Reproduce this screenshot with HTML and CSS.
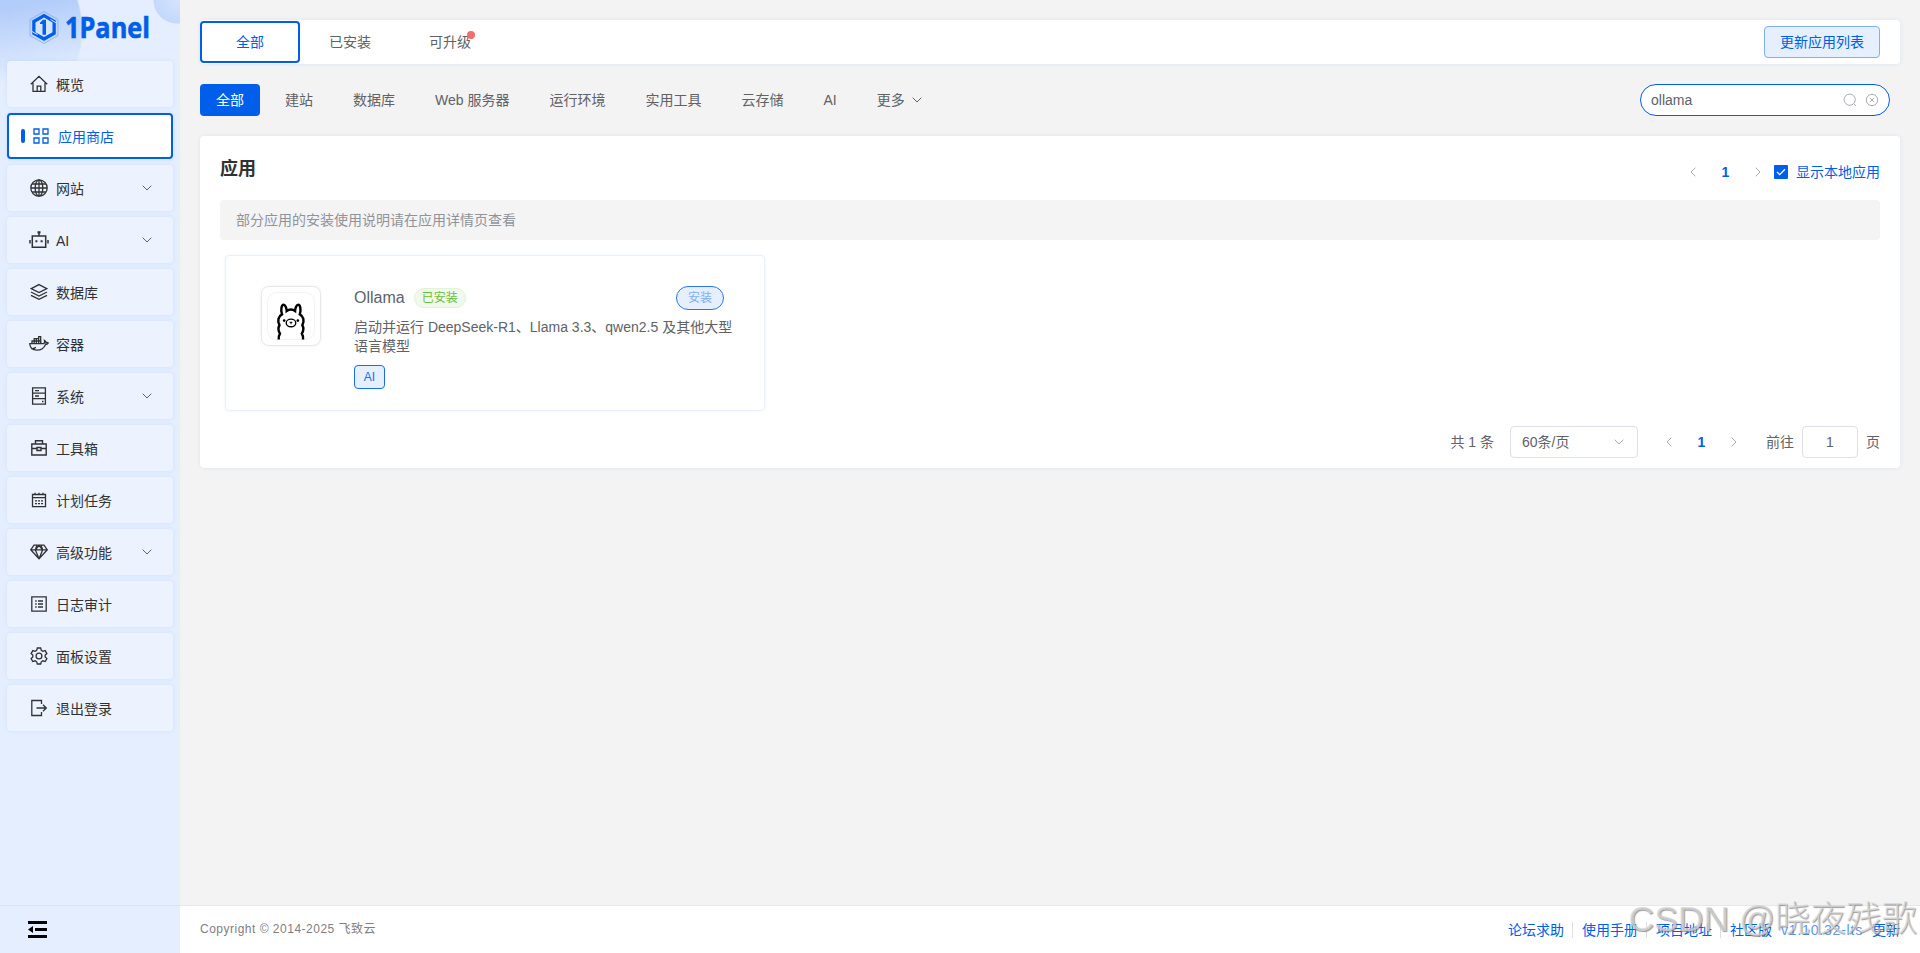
FILE: index.html
```html
<!DOCTYPE html>
<html lang="zh-CN">
<head>
    <meta charset="UTF-8">
    <meta name="viewport" content="width=device-width, initial-scale=1.0">
    <title>1Panel</title>
    <link rel="stylesheet" href="styles.css">
</head>
<body>

    <!-- Sidebar -->
    <aside class="sidebar">
        <div class="logo">
            <svg width="140" height="40" viewBox="0 0 140 40">
                <path d="M15 1.500L29 9.500V25.500L15 33.500L1 25.500V9.500z" fill="none" stroke="#7faaf5" stroke-width=".8"/>
                <path d="M15 3.800L26.800 10.600V24.200L15 31L3.200 24.200V10.600z" fill="#005eeb"/>
                <path d="M15 7.600L23.500 12.500V22.200L15 27.100L6.500 22.200V12.500z" fill="#d5e4fd"/>
                <path d="M3 21.500L8.500 24.500M21.500 9.500l5.500 3.200" stroke="#d5e4fd" stroke-width="1"/>
                <path d="M11 12.800L14 9.800H17V24.800H13.500V14H11z" fill="#005eeb"/>
                <text class="logo-text" x="36" y="28" textLength="85" lengthAdjust="spacingAndGlyphs">1Panel</text>
            </svg>
        </div>
        <nav class="menu">
            <a class="menu-item">
                <svg class="icon" viewBox="0 0 18 18"><path d="M.8 9.300L9 1.300l8.200 8M3 8v8.300h12V8M7.200 16v-4.800h3.600V16"/></svg>
                <span>概览</span>
            </a>
            <a class="menu-item active">
                <i class="bar"></i>
                <svg class="icon icon-small" viewBox="0 0 16 16"><path d="M1 1h5v5H1zM10 1h5v5h-5zM1 10h5v5H1zM10 10h5v5h-5z"/></svg>
                <span>应用商店</span>
            </a>
            <a class="menu-item">
                <svg class="icon" viewBox="0 0 18 18"><circle cx="9" cy="9" r="8.200"/><ellipse cx="9" cy="9" rx="3.800" ry="8.200"/><path d="M9 1v16M1 9h16M2.200 5h13.600M2.200 13h13.600"/></svg>
                <span>网站</span>
                <svg class="arrow" viewBox="0 0 10 6"><path d="M.7.7L5 5 9.300.7"/></svg>
            </a>
            <a class="menu-item">
                <svg class="icon icon-wide" viewBox="0 0 20 18"><path d="M3.300 5h13.400v11.200H3.300zM10 5V1.500M1 9v3.500M19 9v3.500" stroke-width="1.500"/><path d="M8.500.2h3v2.400h-3zM6.400 9.300h2v2h-2zM11.600 9.300h2v2h-2z" class="solid"/></svg>
                <span>AI</span>
                <svg class="arrow" viewBox="0 0 10 6"><path d="M.7.7L5 5 9.300.7"/></svg>
            </a>
            <a class="menu-item">
                <svg class="icon" viewBox="0 0 18 18"><path d="M9 1.600l7.800 4L9 9.600l-7.800-4zM1 9l8 4 8-4M1 12.300l8 4 8-4"/></svg>
                <span>数据库</span>
            </a>
            <a class="menu-item">
                <svg class="icon icon-wide" viewBox="0 0 20 18"><path d="M.8 8.600h13.800c1-.4 1.200-1.700.8-3.200 1 .5 1.500 1.300 1.500 2.200.9-.3 1.800-.2 2.400.3-.6 1.100-1.500 1.500-2.800 1.500-1.500 3.900-4.300 5.700-8.600 5.700C3 15.100.8 12.500.8 8.600z"/><path d="M3 8.500V6h8.800v2.500M5.200 8.500V3.700h4.500v4.800M7.400 8.500V3.700M9.700 3.700V1.600h2v6.900M2.500 13.500c2 .2 3.400-.3 4.300-1.300"/></svg>
                <span>容器</span>
            </a>
            <a class="menu-item">
                <svg class="icon" viewBox="0 0 18 18"><path d="M2.600.8h12.800v16.400H2.600zM2.600 6.200h12.800M2.600 11.700h12.800M5 3.600h4M5 9h4M12 14.500h1.500" stroke-width="1.300"/></svg>
                <span>系统</span>
                <svg class="arrow" viewBox="0 0 10 6"><path d="M.7.7L5 5 9.300.7"/></svg>
            </a>
            <a class="menu-item">
                <svg class="icon" viewBox="0 0 18 18"><path d="M1.800 5h14.400v11H1.800zM5.500 5V1.800h7V5M1.800 9.500h5M11.200 9.500h5M7 8.500h4v3H7z" stroke-width="1.400"/></svg>
                <span>工具箱</span>
            </a>
            <a class="menu-item">
                <svg class="icon" viewBox="0 0 18 18"><path d="M2.500 3.500h13v12.200h-13zM2.500 6.700h13M5 1.800v1.700M9 1.800v1.700M13 1.800v1.700"/><path d="M5 9.800h8M5 12.700h8" stroke-dasharray="2 1"/></svg>
                <span>计划任务</span>
            </a>
            <a class="menu-item">
                <svg class="icon" viewBox="0 0 18 18"><path d="M4 2.200h10l3.300 4.600L9 15.800.7 6.800zM.7 6.800h16.600M9 15.800L5.300 6.800 7 2.200M9 15.800l3.700-9L11 2.200M5.300 6.800L9 2.500l3.700 4.300"/></svg>
                <span>高级功能</span>
                <svg class="arrow" viewBox="0 0 10 6"><path d="M.7.7L5 5 9.300.7"/></svg>
            </a>
            <a class="menu-item">
                <svg class="icon" viewBox="0 0 18 18"><path d="M1.800 1.800h14.400v14.400H1.800z" stroke-width="1.300"/><path d="M5.200 6h1.500M8 6h5M5.200 9h1.500M8 9h5M5.200 12h1.500M8 12h5"/></svg>
                <span>日志审计</span>
            </a>
            <a class="menu-item">
                <svg class="icon" viewBox="0 0 18 18"><path d="M7.300 1h3.400l.6 2.300 1.600 1 2.300-.7 1.700 3-1.700 1.500v1.800l1.700 1.600-1.700 3-2.300-.7-1.600 1-.6 2.200H7.300l-.6-2.200-1.600-1-2.300.7-1.700-3 1.700-1.600V8.100L1.100 6.600l1.700-3 2.300.7 1.600-1z"/><circle cx="9" cy="9" r="2.900"/></svg>
                <span>面板设置</span>
            </a>
            <a class="menu-item">
                <svg class="icon" viewBox="0 0 18 18"><path d="M11.500 5V1.500H1.800v15h9.700V13M6.500 9h9.800M13 5.700L16.300 9 13 12.300" stroke-width="1.300"/></svg>
                <span>退出登录</span>
            </a>
        </nav>
        <div class="collapse">
            <svg width="19" height="17" viewBox="0 0 19 17"><path d="M0 0h19v3H0zM7 7h12v3H7zM0 14h19v3H0zM0 8.500L5 5v7z"/></svg>
        </div>
    </aside>

    <div class="main">
        <div class="content">
            <!-- Tabs -->
            <div class="tabs">
                <a class="tab active">全部</a>
                <a class="tab">已安装</a>
                <a class="tab"><span class="tab-badge">可升级<i class="dot"></i></span></a>
                <button class="btn-update">更新应用列表</button>
            </div>

            <!-- Category filter and search -->
            <div class="filters">
                <button class="filter active">全部</button>
                <button class="filter">建站</button>
                <button class="filter">数据库</button>
                <button class="filter">Web 服务器</button>
                <button class="filter">运行环境</button>
                <button class="filter">实用工具</button>
                <button class="filter">云存储</button>
                <button class="filter">AI</button>
                <button class="filter">更多 <svg class="arrow" viewBox="0 0 10 6"><path d="M.7.7L5 5 9.300.7"/></svg></button>
                <div class="search">
                    <input type="text" value="ollama">
                    <svg width="14" height="14" viewBox="0 0 14 14"><circle cx="6.700" cy="6.700" r="5.600"/><path d="M10.700 10.700l2.300 2.300"/></svg>
                    <svg width="14" height="14" viewBox="0 0 14 14"><circle cx="7" cy="7" r="5.700"/><path d="M5.200 5.200l3.600 3.600M8.800 5.200L5.200 8.800"/></svg>
                </div>
            </div>

            <!-- App list -->
            <section class="panel">
                <div class="panel-header">
                    <h1>应用</h1>
                    <div class="header-tools">
                        <div class="pager">
                            <svg viewBox="0 0 6 10"><path d="M5.300.7L1 5l4.300 4.300"/></svg>
                            <b>1</b>
                            <svg viewBox="0 0 6 10"><path d="M.7.7L5 5 .7 9.300"/></svg>
                        </div>
                        <label class="local">
                            <svg width="14" height="14" viewBox="0 0 14 14"><rect width="14" height="14" rx="1"/><path d="M3 6.900l2.700 2.700 5.300-5.400"/></svg>
                            显示本地应用
                        </label>
                    </div>
                </div>

                <div class="notice">部分应用的安装使用说明请在应用详情页查看</div>

                <div class="app-card">
                    <div class="app-icon">
                        <svg width="48" height="48" viewBox="0 0 47 47">
                            <rect class="tile" x=".5" y=".5" width="46" height="46" rx="9"/>
                            <path d="M11.500 46.500c-.2-2.500.2-4.300 1.200-5.800-1.800-2.700-1.900-5.700-.5-8.200-2.300-4.200-1.100-8.800 2.500-10.500-1.600-5-.3-9.500 1.500-9.500 1.700 0 3 3 3.100 6 2.500-1.700 5.700-1.700 8.200 0 .1-3 1.400-6 3.100-6 1.800 0 3.100 4.500 1.500 9.500 3.600 1.700 4.800 6.300 2.500 10.500 1.400 2.500 1.300 5.500-.5 8.200 1 1.500 1.400 3.300 1.200 5.800"/>
                            <ellipse cx="23.500" cy="30.300" rx="4.700" ry="3.700" stroke-width="1.300"/>
                            <path d="M22.300 29.300l1.200.9 1.200-.9M23.500 30.200v1.500" stroke-width="1.100"/>
                            <circle class="eye" cx="16.800" cy="28" r="1.300"/>
                            <circle class="eye" cx="30.200" cy="28" r="1.300"/>
                        </svg>
                    </div>
                    <div class="app-info">
                        <div class="app-title">
                            <span class="app-name">Ollama</span>
                            <span class="tag-installed">已安装</span>
                            <button class="btn-install">安装</button>
                        </div>
                        <p class="app-desc">启动并运行 DeepSeek-R1、Llama 3.3、qwen2.5 及其他大型语言模型</p>
                        <span class="tag">AI</span>
                    </div>
                </div>

                <div class="pagination">
                    <span>共 1 条</span>
                    <div class="page-size">60条/页 <svg class="arrow" viewBox="0 0 10 6"><path d="M.7.7L5 5 9.300.7"/></svg></div>
                    <div class="pager">
                        <svg viewBox="0 0 6 10"><path d="M5.300.7L1 5l4.300 4.300"/></svg>
                        <b>1</b>
                        <svg viewBox="0 0 6 10"><path d="M.7.7L5 5 .7 9.300"/></svg>
                    </div>
                    <div class="jump">前往 <input type="text" value="1"> 页</div>
                </div>
            </section>
        </div>

        <footer class="footer">
            <span class="copyright">Copyright © 2014-2025 飞致云</span>
            <div class="links">
                <a>论坛求助</a>
                <a>使用手册</a>
                <a>项目地址</a>
                <a>社区版</a>
                <span class="version">v1.10.32-lts</span>
                <span class="update">更新</span>
            </div>
        </footer>
    </div>

    <div class="watermark">CSDN @晓夜残歌</div>

</body>
</html>
```
FILE: styles.css
```css
* {
    box-sizing: border-box;
}

body {
    margin: 0;
    display: flex;
    height: 100vh;
    overflow: hidden;
    font-family: "Liberation Sans", "Noto Sans CJK SC", sans-serif;
    font-size: 14px;
    line-height: 20px;
    color: #606266;
    background: #f3f3f3;
}

button, input {
    font: inherit;
    color: inherit;
}

svg {
    flex: none;
    display: block;
    fill: none;
}

/* Sidebar */
.sidebar {
    width: 180px;
    flex: none;
    display: flex;
    flex-direction: column;
    background:
        radial-gradient(circle at 177px 0, #d5e4fd 0, #c3d8fc 23px, transparent 24px) no-repeat,
        linear-gradient(170deg, rgba(228, 238, 254, 0) 10px, #e4eefe 85px) 0 0 / 100px 100px no-repeat,
        radial-gradient(circle at -18px 30px, #b3cdfa 0, #b3cdfa 99px, transparent 101px) 0 0 / 180px 100px no-repeat,
        #e4eefe;
}

.logo {
    height: 61px;
    padding: 10px 0 0 29px;
}

.logo-text {
    font-family: "Open Sans", sans-serif;
    font-size: 29px;
    font-weight: 700;
    fill: #005eeb;
    stroke: #005eeb;
    stroke-width: 0.6;
}

.menu {
    flex: 1;
    display: flex;
    flex-direction: column;
    gap: 6px;
    padding: 0 7px;
}

.menu-item {
    height: 46px;
    flex: none;
    display: flex;
    align-items: center;
    padding: 0 21px 0 23px;
    border-radius: 4px;
    background: #ecf3fe;
    box-shadow: 0 0 4px rgba(0, 94, 235, 0.1);
    color: #303133;
}

.menu-item span {
    margin-left: 8px;
    padding-top: 1px;
}

.icon {
    width: 18px;
    height: 18px;
    stroke: #303133;
    stroke-width: 1.300;
}

.icon-wide {
    width: 20px;
    margin: 0 -1px;
}

.icon-small {
    width: 16px;
    height: 16px;
}

.icon .solid {
    fill: #303133;
    stroke: none;
}

.menu-item.active {
    padding-left: 12px;
    border: 2px solid #005eeb;
    background: #fff;
    color: #005eeb;
}

.menu-item.active .icon {
    margin-left: 8px;
    stroke: #005eeb;
}

.menu-item.active span {
    margin-left: 9px;
}

.bar {
    width: 4px;
    height: 14px;
    border-radius: 2px;
    background: #005eeb;
}

.arrow {
    width: 10px;
    height: 6px;
    margin-left: auto;
    stroke: #606266;
}

.collapse {
    height: 48px;
    padding: 15px 28px;
    border-top: 1px solid #dce4f0;
}

.collapse svg {
    fill: #000;
}

/* Main column */
.main {
    flex: 1;
    display: flex;
    flex-direction: column;
}

.content {
    flex: 1;
    padding: 20px;
}

.tabs {
    height: 44px;
    display: flex;
    align-items: center;
    padding-right: 20px;
    border-radius: 4px;
    background: #fff;
    box-shadow: 0 0 4px rgba(0, 94, 235, 0.1);
}

.tab {
    width: 100px;
    height: 42px;
    line-height: 42px;
    text-align: center;
}

.tab.active {
    line-height: 38px;
    border: 2px solid #005eeb;
    border-radius: 4px;
    color: #005eeb;
}

.tab-badge {
    position: relative;
}

.dot {
    position: absolute;
    top: -3px;
    right: -4px;
    width: 8px;
    height: 8px;
    border-radius: 50%;
    background: #f56c6c;
}

.btn-update {
    width: 116px;
    height: 32px;
    margin-left: auto;
    padding: 0;
    border: 1px solid #80aff5;
    border-radius: 4px;
    background: #e5effd;
    color: #005eeb;
}

.filters {
    display: flex;
    gap: 8px;
    margin: 20px 10px 20px 0;
}

.filter {
    height: 32px;
    display: flex;
    align-items: center;
    gap: 7px;
    padding: 0 16px;
    border: none;
    border-radius: 4px;
    background: none;
}

.filter.active {
    margin-right: 1px;
    background: #005eeb;
    color: #fff;
}

.search {
    width: 250px;
    height: 32px;
    margin-left: auto;
    display: flex;
    align-items: center;
    gap: 8px;
    padding: 0 10px;
    border: 1px solid #005eeb;
    border-radius: 16px;
    background: #fff;
}

.search input {
    flex: 1;
    min-width: 0;
    padding: 0;
    border: none;
    outline: none;
}

.search svg {
    stroke: #a8abb2;
}

/* App panel */
.panel {
    height: 332px;
    padding: 20px;
    border-radius: 4px;
    background: #fff;
    box-shadow: 0 0 4px rgba(0, 94, 235, 0.1);
}

.panel-header {
    height: 44px;
    display: flex;
    justify-content: space-between;
}

.panel-header h1 {
    margin: 0;
    font-size: 18px;
    line-height: 27px;
    color: #303133;
}

.header-tools {
    height: 32px;
    display: flex;
    align-items: center;
}

.pager {
    display: flex;
    align-items: center;
    color: #005eeb;
}

.pager svg {
    width: 6px;
    height: 10px;
    stroke: #a8abb2;
}

.pager b {
    width: 59px;
    text-align: center;
}

.local {
    display: flex;
    align-items: center;
    gap: 8px;
    margin-left: 13px;
    color: #005eeb;
}

.local rect {
    fill: #005eeb;
}

.local path {
    stroke: #fff;
    stroke-width: 1.300;
}

.notice {
    height: 40px;
    padding: 0 16px;
    line-height: 40px;
    border-radius: 4px;
    background: #f4f4f5;
    color: #909399;
}

.app-card {
    width: 540px;
    height: 156px;
    display: flex;
    margin: 15px 0 15px 5px;
    padding: 30px 30px 0 35px;
    border: 1px solid #eaf0fa;
    border-radius: 4px;
    box-shadow: 0 0 3px rgba(0, 94, 235, 0.08);
}

.app-icon {
    width: 60px;
    height: 60px;
    flex: none;
    padding: 5px;
    border: 1px solid #e8e8e8;
    border-radius: 8px;
    box-shadow: 0 0 2px rgba(0, 0, 0, 0.1);
}

.app-icon svg {
    stroke: #000;
    stroke-width: 2.400;
}

.app-icon .tile {
    stroke: #f3f3f3;
    stroke-width: 1;
}

.app-icon .eye {
    fill: #000;
    stroke: none;
}

.app-info {
    flex: 1;
    margin-left: 33px;
}

.app-title {
    height: 24px;
    display: flex;
    align-items: center;
}

.app-name {
    font-size: 16px;
}

.tag-installed {
    width: 52px;
    height: 20px;
    margin-left: 9px;
    line-height: 18px;
    text-align: center;
    font-size: 12px;
    border: 1px solid #e1f3d8;
    border-radius: 10px;
    background: #f0f9eb;
    color: #67c23a;
}

.btn-install {
    width: 48px;
    height: 24px;
    margin: 0 10px 0 auto;
    padding: 0;
    font-size: 12px;
    border: 1px solid #2b77ef;
    border-radius: 12px;
    background: #e5effd;
    color: #80aff5;
}

.app-desc {
    margin: 8px 0 9px;
    line-height: 19px;
}

.tag {
    display: block;
    width: 31px;
    height: 24px;
    line-height: 22px;
    text-align: center;
    font-size: 12px;
    border: 1px solid #1a6eed;
    border-radius: 4px;
    background: #e5effd;
    color: #1a6eed;
}

.pagination {
    height: 32px;
    display: flex;
    align-items: center;
    justify-content: flex-end;
}

.page-size {
    width: 128px;
    height: 32px;
    display: flex;
    align-items: center;
    margin: 0 28px 0 16px;
    padding: 0 13px 0 11px;
    border: 1px solid #dcdfe6;
    border-radius: 4px;
}

.page-size .arrow {
    stroke: #a8abb2;
}

.jump {
    display: flex;
    align-items: center;
    gap: 8px;
    margin-left: 29px;
}

.jump input {
    width: 56px;
    height: 32px;
    padding: 0;
    text-align: center;
    border: 1px solid #dcdfe6;
    border-radius: 4px;
    outline: none;
}

/* Footer */
.footer {
    height: 48px;
    display: flex;
    align-items: center;
    justify-content: space-between;
    padding: 0 20px;
    border-top: 1px solid #e4e7ed;
    background: #fff;
}

.copyright {
    padding-bottom: 2px;
    font-size: 12px;
    letter-spacing: 0.5px;
    color: #808080;
}

.links {
    display: flex;
    align-items: center;
    color: #005eeb;
}

.links a + a {
    margin-left: 8px;
    padding-left: 9px;
    border-left: 1px solid #dcdfe6;
    line-height: 16px;
}

.version {
    margin-left: 9px;
    letter-spacing: 0.8px;
    color: #5c97f2;
}

.update {
    margin-left: 9px;
}

.watermark {
    position: absolute;
    right: 3px;
    bottom: 12px;
    font-size: 35.500px;
    line-height: 44px;
    font-weight: 300;
    color: rgba(215, 215, 215, 0.75);
    text-shadow: 1px 1px 1px rgba(90, 90, 90, 0.6);
}
```
